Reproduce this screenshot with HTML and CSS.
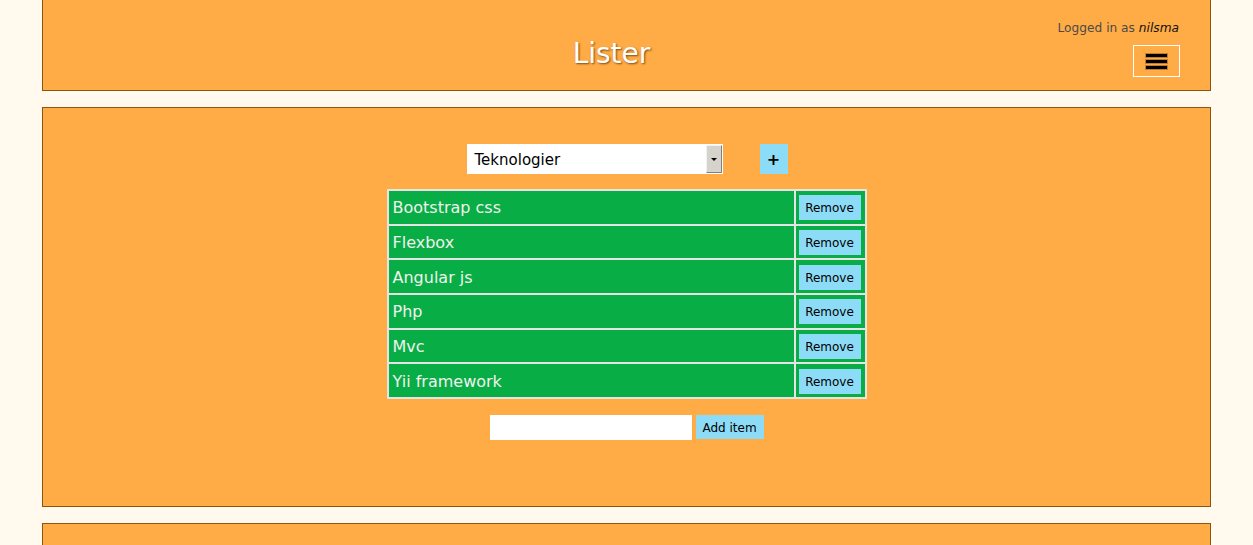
FILE: index.html
```html
<!DOCTYPE html>
<html lang="no">
<head>
<meta charset="utf-8">
<title>Lister</title>
<link rel="stylesheet" href="styles.css">
</head>
<body>
<header class="panel header">
  <div class="header-side"></div>
  <h1 class="title">Lister</h1>
  <div class="header-side header-right">
    <div class="login">Logged in as <em>nilsma</em></div>
    <button class="menu-btn" aria-label="Menu">
      <span class="bar"></span><span class="bar"></span><span class="bar"></span>
    </button>
  </div>
</header>

<main class="panel main">
  <div class="list-picker">
    <div class="fake-select">
      <span class="fake-select-text">Teknologier</span>
      <span class="fake-select-arrow"><span class="tri"></span></span>
    </div>
    <button class="btn plus-btn">+</button>
  </div>

  <table class="items">
    <tr><td class="name">Bootstrap css</td><td class="action"><button class="btn remove-btn">Remove</button></td></tr>
    <tr><td class="name">Flexbox</td><td class="action"><button class="btn remove-btn">Remove</button></td></tr>
    <tr><td class="name">Angular js</td><td class="action"><button class="btn remove-btn">Remove</button></td></tr>
    <tr><td class="name">Php</td><td class="action"><button class="btn remove-btn">Remove</button></td></tr>
    <tr><td class="name">Mvc</td><td class="action"><button class="btn remove-btn">Remove</button></td></tr>
    <tr><td class="name">Yii framework</td><td class="action"><button class="btn remove-btn">Remove</button></td></tr>
  </table>

  <div class="add-row">
    <input class="add-input" type="text">
    <button class="btn add-btn">Add item</button>
  </div>
</main>

<footer class="panel footer"></footer>
</body>
</html>
```

FILE: styles.css
```css
* { box-sizing: border-box; }

html, body {
  margin: 0;
  padding: 0;
  background: #fff9ee;
  font-family: "DejaVu Sans", sans-serif;
  overflow: hidden;
}

.panel {
  margin: 0 42px;
  background: #ffac46;
  border: 1px solid #8a5510;
}

.header {
  border-top: none;
  height: 91px;
  display: grid;
  grid-template-columns: 1fr auto 1fr;
  align-items: start;
  padding: 20px 30px 0 0;
}

.title {
  margin: 0;
  padding-top: 17px;
  font-size: 28px;
  font-weight: normal;
  line-height: 33px;
  color: #ffffff;
  text-shadow: 1px 1px 2px #7a4a10;
}

.header-right {
  display: flex;
  flex-direction: column;
  align-items: flex-end;
}

.login {
  font-size: 12.2px;
  line-height: 14px;
  color: #4a4a4a;
  padding-top: 1px;
  padding-right: 1px;
}

.login em { color: #111; }

.menu-btn {
  margin-top: 10px;
  width: 47px;
  height: 32px;
  border: 1px solid #ffffff;
  background: transparent;
  padding: 0;
  display: flex;
  flex-direction: column;
  align-items: center;
  justify-content: center;
  gap: 3px;
}

.bar {
  display: block;
  width: 21px;
  height: 3px;
  background: #000;
  box-shadow: 0 0 0 1px rgba(120, 70, 10, 0.45);
}

.main {
  margin-top: 16px;
  height: 400px;
  display: flex;
  flex-direction: column;
  align-items: center;
  padding-top: 36px;
}

.list-picker {
  display: flex;
  gap: 37px;
  padding-left: 1px;
}

.fake-select {
  width: 256px;
  height: 30px;
  background: #fff;
  border: 1px solid #fff;
  display: flex;
  align-items: center;
}

.fake-select-text {
  flex: 1;
  padding-left: 7px;
  padding-top: 2px;
  font-size: 15px;
  color: #000;
}

.fake-select-arrow {
  width: 16px;
  height: 100%;
  background: #d6d3cc;
  border-top: 1px solid #f2f2f2;
  border-left: 1px solid #f2f2f2;
  border-right: 1px solid #808080;
  border-bottom: 1px solid #808080;
  display: flex;
  align-items: center;
  justify-content: center;
}

.tri {
  width: 0;
  height: 0;
  border-left: 3px solid transparent;
  border-right: 3px solid transparent;
  border-top: 3px solid #000;
}

.btn {
  background: #8ddcf7;
  border: none;
  color: #000;
  font-family: "DejaVu Sans", sans-serif;
  padding: 0;
}

.plus-btn {
  width: 28px;
  height: 30px;
  font-size: 16px;
  font-weight: bold;
  padding-top: 1px;
}

.items {
  margin-top: 15px;
  width: 480px;
  table-layout: fixed;
  border-collapse: separate;
  border-spacing: 0;
  border: 1px solid #e4e4e4;
}

.items td {
  border: 1px solid #e4e4e4;
  background: #09ad45;
  height: 34.67px;
  vertical-align: middle;
}

.name {
  padding: 1px 4px 0;
  font-size: 16px;
  color: #f0f3ee;
}

.action {
  width: 71px;
  padding: 1px 3px 0;
}

.remove-btn {
  display: block;
  width: 62px;
  height: 25px;
  font-size: 12px;
  padding-top: 1px;
}

.add-row {
  margin-top: 16px;
  display: flex;
  align-items: center;
  gap: 4px;
}

.add-input {
  width: 202px;
  height: 25px;
  border: none;
  background: #fff;
  margin: 0;
}

.add-btn {
  width: 68px;
  height: 24px;
  font-size: 12px;
  padding-top: 2px;
}

.footer {
  margin-top: 16px;
  height: 100px;
}
```
